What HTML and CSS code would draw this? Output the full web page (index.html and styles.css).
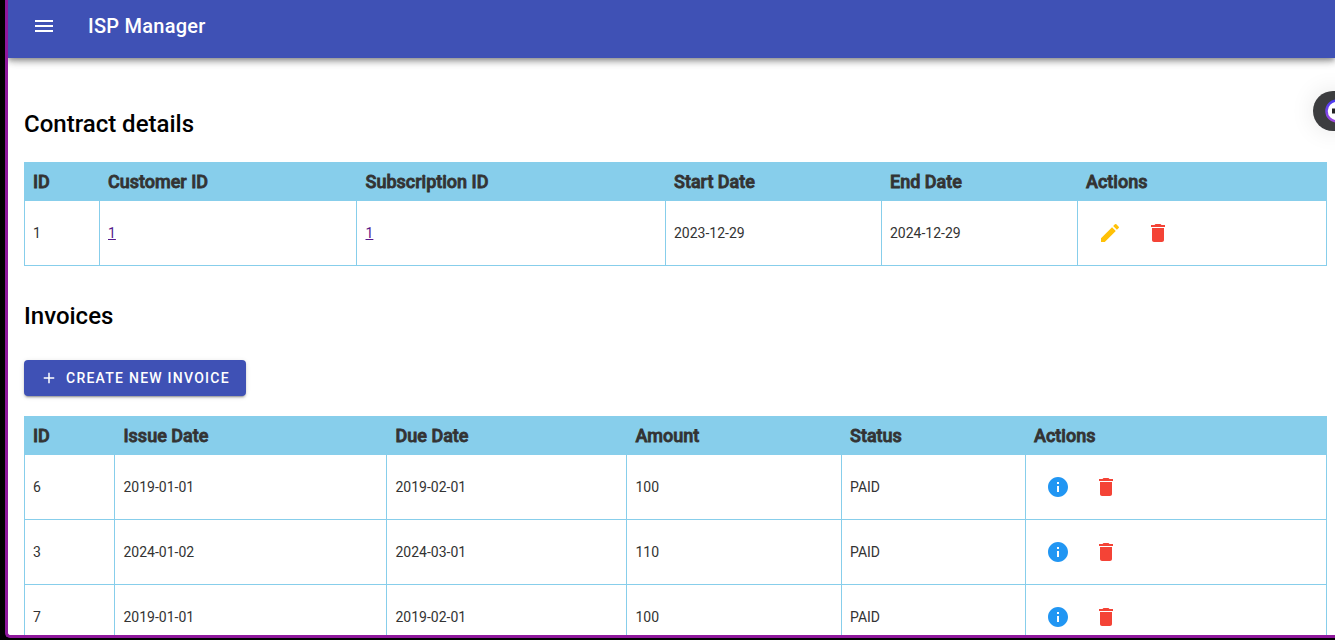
FILE: index.html
```
<!DOCTYPE html>
<html lang="en">
<head>
<meta charset="utf-8">
<title>ISP Manager</title>
<link rel="stylesheet" href="styles.css">
</head>
<body>
<svg class="sprite" xmlns="http://www.w3.org/2000/svg">
  <symbol id="menu" viewBox="0 0 24 24"><path d="M3 18h18v-2H3v2zm0-5h18v-2H3v2zm0-7v2h18V6H3z"/></symbol>
  <symbol id="add" viewBox="0 0 24 24"><path d="M19 13h-6v6h-2v-6H5v-2h6V5h2v6h6v2z"/></symbol>
  <symbol id="edit" viewBox="0 0 24 24"><path d="M3 17.25V21h3.75L17.81 9.94l-3.75-3.75L3 17.25zM20.71 7.04a1 1 0 0 0 0-1.41l-2.34-2.34a1 1 0 0 0-1.41 0l-1.83 1.83 3.75 3.75 1.83-1.83z"/></symbol>
  <symbol id="delete" viewBox="0 0 24 24"><path d="M6 19c0 1.100.9 2 2 2h8c1.100 0 2-.9 2-2V7H6v12zM19 4h-3.500l-1-1h-5l-1 1H5v2h14V4z"/></symbol>
  <symbol id="info" viewBox="0 0 24 24"><path d="M12 2C6.480 2 2 6.480 2 12s4.480 10 10 10 10-4.480 10-10S17.520 2 12 2zm1 15h-2v-6h2v6zm0-8h-2V7h2v2z"/></symbol>
</svg>
<div class="window">
  <header class="app-bar">
    <svg class="icon"><use href="#menu"/></svg>
    <span class="app-title">ISP Manager</span>
  </header>
  <main class="content">
    <h2 class="heading">Contract details</h2>
    <table class="table contract">
      <colgroup><col class="c1"><col class="c2"><col class="c3"><col class="c4"><col class="c5"><col></colgroup>
      <thead><tr><th>ID</th><th>Customer ID</th><th>Subscription ID</th><th>Start Date</th><th>End Date</th><th>Actions</th></tr></thead>
      <tbody>
        <tr><td>1</td><td><a class="link" href="#customer">1</a></td><td><a class="link" href="#subscription">1</a></td><td>2023-12-29</td><td>2024-12-29</td><td><div class="actions"><svg class="icon edit"><use href="#edit"/></svg><svg class="icon delete"><use href="#delete"/></svg></div></td></tr>
      </tbody>
    </table>
    <h2 class="heading">Invoices</h2>
    <button class="create"><svg class="icon-small"><use href="#add"/></svg>CREATE NEW INVOICE</button>
    <table class="table invoices">
      <colgroup><col class="c1"><col class="c2"><col class="c3"><col class="c4"><col class="c5"><col></colgroup>
      <thead><tr><th>ID</th><th>Issue Date</th><th>Due Date</th><th>Amount</th><th>Status</th><th>Actions</th></tr></thead>
      <tbody>
        <tr><td>6</td><td>2019-01-01</td><td>2019-02-01</td><td>100</td><td>PAID</td><td><div class="actions"><svg class="icon info"><use href="#info"/></svg><svg class="icon delete"><use href="#delete"/></svg></div></td></tr>
        <tr><td>3</td><td>2024-01-02</td><td>2024-03-01</td><td>110</td><td>PAID</td><td><div class="actions"><svg class="icon info"><use href="#info"/></svg><svg class="icon delete"><use href="#delete"/></svg></div></td></tr>
        <tr><td>7</td><td>2019-01-01</td><td>2019-02-01</td><td>100</td><td>PAID</td><td><div class="actions"><svg class="icon info"><use href="#info"/></svg><svg class="icon delete"><use href="#delete"/></svg></div></td></tr>
      </tbody>
    </table>
  </main>
  <div class="assistant">
    <svg class="assistant-logo" viewBox="0 0 24 24">
      <defs><linearGradient id="ring" x1="0" y1="0" x2="0" y2="1"><stop offset="0" stop-color="#4a3cf0"/><stop offset="1" stop-color="#a04be0"/></linearGradient></defs>
      <circle cx="12" cy="12" r="10.500" fill="#fff" stroke="url(#ring)" stroke-width="2.500"/>
      <rect x="7" y="9.500" width="10" height="5" fill="#222"/>
    </svg>
  </div>
</div>
</body>
</html>
```
FILE: styles.css
```
* { box-sizing: border-box; }

body {
  margin: 0;
  height: 640px;
  padding: 0 0 2px 5px;
  overflow: hidden;
  background: #000;
  font-family: Roboto, sans-serif;
  font-size: 14px;
  color: #333;
}

.sprite { position: absolute; width: 0; height: 0; }

.window {
  position: relative;
  height: 638px;
  overflow: hidden;
  background: #fff;
  border: solid #8e179c;
  border-width: 0 0 3px 3px;
  border-radius: 0 0 0 5px;
}

.app-bar {
  display: flex;
  align-items: center;
  gap: 32px;
  height: 58px;
  padding: 0 24px 6px;
  background: #3f51b5;
  color: #fff;
  box-shadow: 0 2px 4px -1px rgba(0,0,0,.2), 0 4px 5px rgba(0,0,0,.14), 0 1px 10px rgba(0,0,0,.12), 0 2px 10px rgba(0,0,0,.2);
}

.app-title {
  font-size: 20px;
  font-weight: 500;
  letter-spacing: .25px;
}

.icon { display: block; width: 24px; height: 24px; fill: currentColor; }
.icon-small { width: 18px; height: 18px; fill: currentColor; }

.content { padding: 50px 8px 0 16px; }

.heading {
  margin: 0;
  font-size: 24px;
  line-height: 32px;
  font-weight: 500;
  color: #000;
}

.table {
  width: 1303px;
  table-layout: fixed;
  border-collapse: collapse;
}

.contract { margin: 22px 0 34px; }
.invoices { margin-top: 20px; }

.contract .c1 { width: 75px; }
.contract .c2 { width: 257px; }
.contract .c3 { width: 309px; }
.contract .c4 { width: 216px; }
.contract .c5 { width: 196px; }
.invoices .c1 { width: 90px; }
.invoices .c2 { width: 272px; }
.invoices .c3 { width: 240px; }
.invoices .c4 { width: 215px; }
.invoices .c5 { width: 184px; }

.table th,
.table td {
  border: 1px solid #87ceeb;
  padding: 0 8px;
  text-align: left;
}

.contract tr > :nth-child(3),
.invoices tr > :nth-child(2),
.invoices tr > :nth-child(3),
.invoices tr > :nth-child(4) { padding-left: 8.500px; }

.table th {
  height: 38px;
  background: #87ceeb;
  font-size: 18px;
  font-weight: 500;
  -webkit-text-stroke: .8px #333;
}

.table td { height: 65px; }

.link { color: #551a8b; }

.actions { display: flex; gap: 24px; padding-left: 12px; }
.invoices .actions { padding-left: 11.500px; }
.edit { color: #ffc107; }
.delete { color: #f44336; }
.info { color: #2196f3; }

.create {
  display: flex;
  align-items: center;
  gap: 8px;
  width: 222px;
  height: 36px;
  margin-top: 28px;
  padding: 0 16px;
  border: 0;
  border-radius: 4px;
  background: #3f51b5;
  color: #fff;
  font: 500 14px Roboto, sans-serif;
  letter-spacing: 1.25px;
  white-space: nowrap;
  box-shadow: 0 3px 1px -2px rgba(0,0,0,.2), 0 2px 2px rgba(0,0,0,.14), 0 1px 5px rgba(0,0,0,.12);
}

/* Floating assistant button, partly past the right edge */
.assistant {
  position: absolute;
  top: 91px;
  right: -18px;
  display: flex;
  align-items: center;
  justify-content: center;
  width: 40px;
  height: 40px;
  border-radius: 50%;
  background: #3c3d3f;
  box-shadow: 0 0 24px rgba(0,0,0,.1);
}

.assistant-logo { flex: none; width: 24px; height: 24px; margin-left: 8px; }
```
